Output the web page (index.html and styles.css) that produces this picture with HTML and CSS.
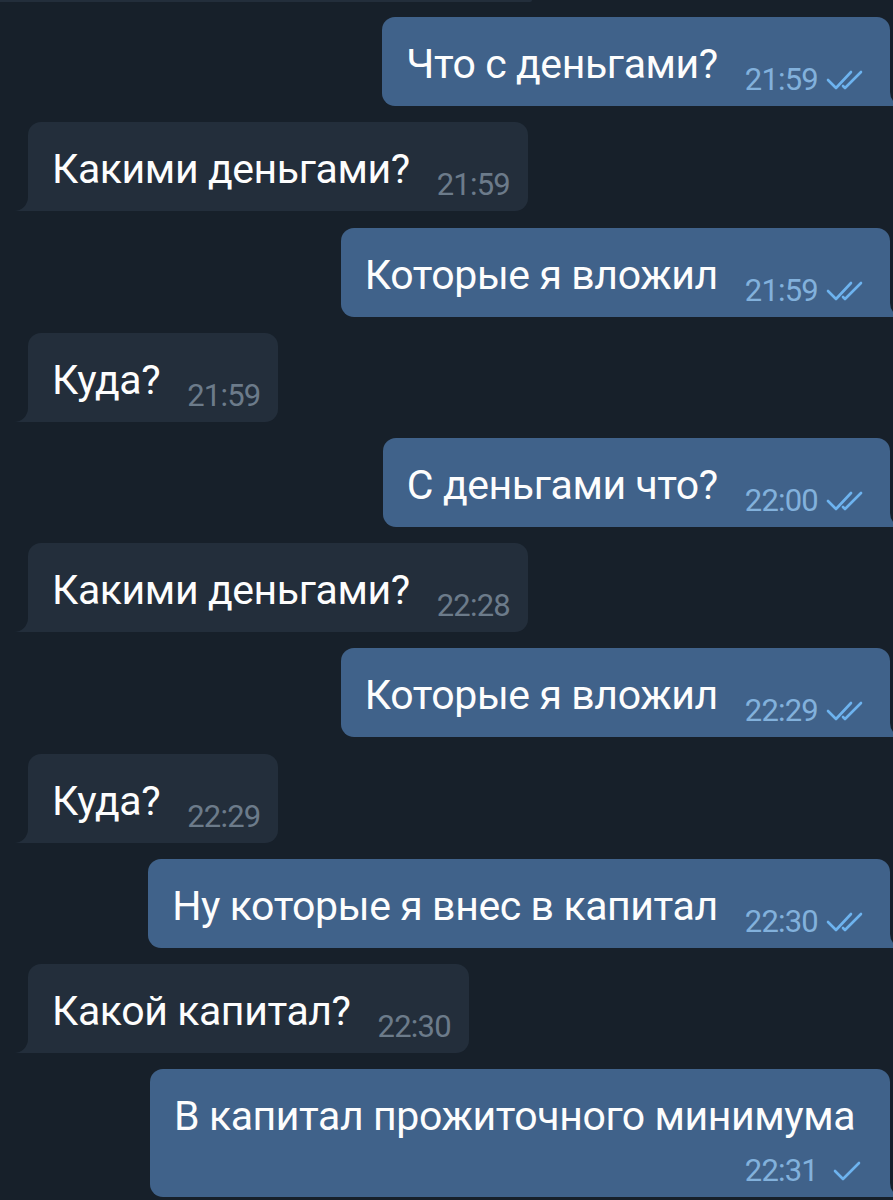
FILE: index.html
```html
<!DOCTYPE html>
<html lang="ru">
<head>
    <meta charset="UTF-8">
    <meta name="viewport" content="width=device-width, initial-scale=1.0">
    <title>Чат</title>
    <link rel="stylesheet" href="styles.css">
</head>
<body>

    <div class="chat">
        <!-- end of the previous message, cut off by the top edge -->
        <div class="prev-edge"></div>

        <div class="row out">
            <div class="bubble">
                <span class="text">Что с деньгами?</span>
                <span class="meta">21:59 <svg class="check" viewBox="0 0 40 22"><path d="M2 11 L10 19 L25 3 M17 17 L19 19 L35 3"/></svg></span>
            </div>
        </div>

        <div class="row in">
            <div class="bubble">
                <span class="text">Какими деньгами?</span>
                <span class="meta">21:59</span>
            </div>
        </div>

        <div class="row out">
            <div class="bubble">
                <span class="text">Которые я вложил</span>
                <span class="meta">21:59 <svg class="check" viewBox="0 0 40 22"><path d="M2 11 L10 19 L25 3 M17 17 L19 19 L35 3"/></svg></span>
            </div>
        </div>

        <div class="row in">
            <div class="bubble">
                <span class="text">Куда?</span>
                <span class="meta">21:59</span>
            </div>
        </div>

        <div class="row out">
            <div class="bubble">
                <span class="text">С деньгами что?</span>
                <span class="meta">22:00 <svg class="check" viewBox="0 0 40 22"><path d="M2 11 L10 19 L25 3 M17 17 L19 19 L35 3"/></svg></span>
            </div>
        </div>

        <div class="row in">
            <div class="bubble">
                <span class="text">Какими деньгами?</span>
                <span class="meta">22:28</span>
            </div>
        </div>

        <div class="row out">
            <div class="bubble">
                <span class="text">Которые я вложил</span>
                <span class="meta">22:29 <svg class="check" viewBox="0 0 40 22"><path d="M2 11 L10 19 L25 3 M17 17 L19 19 L35 3"/></svg></span>
            </div>
        </div>

        <div class="row in">
            <div class="bubble">
                <span class="text">Куда?</span>
                <span class="meta">22:29</span>
            </div>
        </div>

        <div class="row out">
            <div class="bubble">
                <span class="text">Ну которые я внес в капитал</span>
                <span class="meta">22:30 <svg class="check" viewBox="0 0 40 22"><path d="M2 11 L10 19 L25 3 M17 17 L19 19 L35 3"/></svg></span>
            </div>
        </div>

        <div class="row in">
            <div class="bubble">
                <span class="text">Какой капитал?</span>
                <span class="meta">22:30</span>
            </div>
        </div>

        <div class="row out">
            <div class="bubble wide">
                <span class="text">В капитал прожиточного минимума</span>
                <span class="meta">22:31 <svg class="check single" viewBox="0 0 40 22"><path d="M9 11 L17 19 L33 3"/></svg></span>
            </div>
        </div>
    </div>

</body>
</html>
```

FILE: styles.css
```css
body {
    margin: 0;
    background-color: #17202a;
    font-family: Roboto, "Noto Sans", sans-serif;
    color: #fdfdfd;
    overflow: hidden;
}
.chat {
    display: flex;
    flex-direction: column;
    gap: 16.2px;
}
.prev-edge {
    height: 2px;
    width: 532px;
    margin-bottom: -1px;
    background: #232e3b;
    border-bottom-right-radius: 2px;
}
.row {
    display: flex;
}
.row.in {
    justify-content: flex-start;
    padding-left: 28px;
}
.row.out {
    justify-content: flex-end;
    padding-right: 3px;
}
.bubble {
    position: relative;
    box-sizing: border-box;
    display: flex;
    flex-wrap: wrap;
    align-items: flex-end;
    justify-content: flex-end;
    padding: 25px 24px 11px 24px;
    border-radius: 13px;
}
.in .bubble {
    background: #232e3b;
    padding-right: 18px;
    border-bottom-left-radius: 0;
}
.out .bubble {
    background: #40628a;
    border-bottom-right-radius: 0;
}
.text {
    font-size: 41px;
    line-height: 44px;
    margin-bottom: 9px;
    letter-spacing: -0.4px;
}
.meta {
    display: flex;
    align-items: center;
    gap: 8px;
    margin-left: 27px;
    font-size: 31px;
    line-height: 30px;
    letter-spacing: -0.8px;
}
.in .meta {
    color: #6c7b8a;
}
.out .meta {
    color: #82b1dc;
}
.bubble.wide {
    max-width: 740px;
}
.wide .text {
    flex-basis: 100%;
    margin-bottom: 0;
}
.wide .meta {
    margin-top: 18px;
}
.check {
    width: 40px;
    height: 22px;
    fill: none;
    stroke: #6db3ef;
    stroke-width: 2.6;
    stroke-linecap: round;
    stroke-linejoin: round;
}

/* bubble tails */
.in .bubble::before,
.in .bubble::after,
.out .bubble::before,
.out .bubble::after {
    content: "";
    position: absolute;
    bottom: 0;
    width: 16px;
    height: 18px;
}
.in .bubble::before {
    left: -14px;
    background: #232e3b;
}
.in .bubble::after {
    left: -16px;
    width: 16px;
    background: #17202a;
    border-bottom-right-radius: 14px;
}
.out .bubble::before {
    right: -14px;
    background: #40628a;
}
.out .bubble::after {
    right: -16px;
    background: #17202a;
    border-bottom-left-radius: 14px;
}
```
